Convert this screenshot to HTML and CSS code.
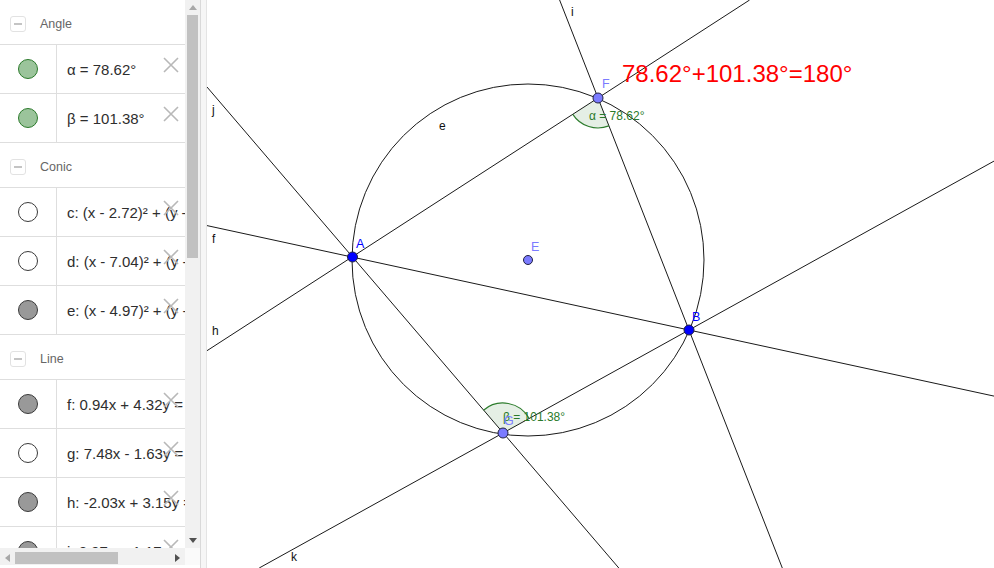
FILE: index.html
```html
<!DOCTYPE html>
<html>
<head>
<meta charset="utf-8">
<title>Inscribed quadrilateral</title>
<link rel="stylesheet" href="styles.css">
</head>
<body>
<div class="app">
  <div class="algebra">
    <div class="av-top">
      <div class="av-list">
        <div class="head first"><span class="toggle"></span><span class="head-label">Angle</span></div>
        <div class="row"><div class="marble-cell"><span class="marble green"></span></div><div class="expr">α = 78.62°</div><span class="del"><svg width="16" height="16" viewBox="0 0 16 16"><path d="M1 1L15 15M15 1L1 15"/></svg></span></div>
        <div class="row"><div class="marble-cell"><span class="marble green"></span></div><div class="expr">β = 101.38°</div><span class="del"><svg width="16" height="16" viewBox="0 0 16 16"><path d="M1 1L15 15M15 1L1 15"/></svg></span></div>
        <div class="head"><span class="toggle"></span><span class="head-label">Conic</span></div>
        <div class="row"><div class="marble-cell"><span class="marble white"></span></div><div class="expr">c: (x - 2.72)² + (y - 5.06)² = 10.39</div><span class="del"><svg width="16" height="16" viewBox="0 0 16 16"><path d="M1 1L15 15M15 1L1 15"/></svg></span></div>
        <div class="row"><div class="marble-cell"><span class="marble white"></span></div><div class="expr">d: (x - 7.04)² + (y - 4.12)² = 13.47</div><span class="del"><svg width="16" height="16" viewBox="0 0 16 16"><path d="M1 1L15 15M15 1L1 15"/></svg></span></div>
        <div class="row"><div class="marble-cell"><span class="marble gray"></span></div><div class="expr">e: (x - 4.97)² + (y - 4.94)² = 12.28</div><span class="del"><svg width="16" height="16" viewBox="0 0 16 16"><path d="M1 1L15 15M15 1L1 15"/></svg></span></div>
        <div class="head"><span class="toggle"></span><span class="head-label">Line</span></div>
        <div class="row"><div class="marble-cell"><span class="marble gray"></span></div><div class="expr">f: 0.94x + 4.32y = 23.25</div><span class="del"><svg width="16" height="16" viewBox="0 0 16 16"><path d="M1 1L15 15M15 1L1 15"/></svg></span></div>
        <div class="row"><div class="marble-cell"><span class="marble white"></span></div><div class="expr">g: 7.48x - 1.63y = 31.06</div><span class="del"><svg width="16" height="16" viewBox="0 0 16 16"><path d="M1 1L15 15M15 1L1 15"/></svg></span></div>
        <div class="row"><div class="marble-cell"><span class="marble gray"></span></div><div class="expr">h: -2.03x + 3.15y = 13.16</div><span class="del"><svg width="16" height="16" viewBox="0 0 16 16"><path d="M1 1L15 15M15 1L1 15"/></svg></span></div>
        <div class="row"><div class="marble-cell"><span class="marble gray"></span></div><div class="expr">i: 2.97x + 1.17y = 27.38</div><span class="del"><svg width="16" height="16" viewBox="0 0 16 16"><path d="M1 1L15 15M15 1L1 15"/></svg></span></div>
      </div>
      <div class="vscroll">
        <span class="arrow"><svg width="8" height="5" viewBox="0 0 8 5"><path d="M0 5L4 0L8 5Z" fill="#a8a8a8"/></svg></span>
        <span class="vthumb"></span>
        <span class="vspace"></span>
        <span class="arrow"><svg width="8" height="5" viewBox="0 0 8 5"><path d="M0 0L4 5L8 0Z" fill="#505050"/></svg></span>
      </div>
    </div>
    <div class="av-bottom">
      <div class="hscroll">
        <span class="harrow"><svg width="5" height="8" viewBox="0 0 5 8"><path d="M5 0L0 4L5 8Z" fill="#a8a8a8"/></svg></span>
        <span class="hthumb"></span>
        <span class="hspace"></span>
        <span class="harrow"><svg width="5" height="8" viewBox="0 0 5 8"><path d="M0 0L5 4L0 8Z" fill="#505050"/></svg></span>
      </div>
      <div class="corner"></div>
    </div>
  </div>
  <div class="splitter"></div>
  <div class="graphics">
    <svg class="canvas" width="787" height="568" viewBox="207 0 787 568">
      <g class="lines">
        <line x1="207" y1="225.6" x2="994" y2="396.1"/>
        <line x1="207" y1="350.7" x2="749.6" y2="0"/>
        <line x1="207" y1="87" x2="618.8" y2="568"/>
        <line x1="559.6" y1="0" x2="782.3" y2="568"/>
        <line x1="259.2" y1="568" x2="994" y2="161.1"/>
        <circle cx="528" cy="260" r="176" fill="none"/>
      </g>
      <path class="sector" d="M598 98L608.9 125.9A30 30 0 0 1 572.8 114.3Z"/>
      <path class="arc" d="M608.9 125.9A30 30 0 0 1 572.8 114.3"/>
      <path class="sector" d="M503 433L483.5 410.2A30 30 0 0 1 529.2 418.5Z"/>
      <path class="arc" d="M483.5 410.2A30 30 0 0 1 529.2 418.5"/>
      <g class="lbl">
        <text x="571" y="16">i</text>
        <text x="212" y="114">j</text>
        <text x="212" y="243">f</text>
        <text x="212" y="335">h</text>
        <text x="291" y="561">k</text>
        <text x="439" y="130">e</text>
      </g>
      <text class="anglbl" x="589" y="120">α = 78.62°</text>
      <text class="anglbl" x="503" y="421">β = 101.38°</text>
      <circle class="pt dark" cx="352.5" cy="257" r="5"/>
      <circle class="pt dark" cx="689" cy="330" r="5"/>
      <circle class="pt light" cx="528" cy="260" r="4.5"/>
      <circle class="pt light" cx="598" cy="98" r="5"/>
      <circle class="pt light" cx="503" cy="433" r="5"/>
      <text class="ptl dark-t" x="356" y="248">A</text>
      <text class="ptl dark-t" x="692" y="321">B</text>
      <text class="ptl light-t" x="531" y="251">E</text>
      <text class="ptl light-t" x="602" y="88">F</text>
      <text class="ptl light-t" x="504" y="425">G</text>
      <text class="sum" x="622" y="82">78.62°+101.38°=180°</text>
    </svg>
  </div>
</div>
</body>
</html>
```

FILE: styles.css
```css
* { box-sizing: border-box; }
html, body { margin: 0; padding: 0; }
body {
  width: 994px;
  height: 568px;
  overflow: hidden;
  background: #ffffff;
  font-family: "Liberation Sans", Arial, sans-serif;
}
.app { display: flex; height: 568px; }

/* algebra view */
.algebra { width: 200px; display: flex; flex-direction: column; }
.av-top { display: flex; height: 548px; }
.av-list { width: 185px; overflow: hidden; }

.head {
  height: 45px;
  border-bottom: 1px solid #dedede;
  display: flex;
  align-items: center;
  padding-top: 3px;
  padding-left: 10px;
}
.head.first { height: 45px; }
.toggle {
  width: 16px;
  height: 16px;
  border: 1px solid #e2e2e2;
  border-radius: 3px;
  position: relative;
  flex: none;
}
.toggle::after {
  content: "";
  position: absolute;
  left: 3px;
  top: 6px;
  width: 8px;
  height: 2px;
  background: #c4c4c4;
}
.head-label {
  margin-left: 14px;
  font-size: 12.5px;
  color: #666666;
}

.row {
  height: 49px;
  border-bottom: 1px solid #dedede;
  display: flex;
  position: relative;
  white-space: nowrap;
}
.marble-cell {
  width: 57px;
  flex: none;
  border-right: 1px solid #dedede;
  display: flex;
  align-items: center;
  justify-content: center;
  padding-right: 1px;
}
.marble {
  width: 20px;
  height: 20px;
  border-radius: 50%;
  border: 1px solid #333333;
}
.marble.green { background: #9bc49b; border-color: #2b7a2b; }
.marble.gray { background: #999999; border-color: #3a3a3a; }
.marble.white { background: #ffffff; border-color: #3a3a3a; }
.expr {
  padding-left: 10px;
  display: flex;
  align-items: center;
  font-size: 15px;
  color: #2e2e2e;
}
.del {
  position: absolute;
  left: 163px;
  top: 12px;
  width: 16px;
  height: 16px;
}
.del svg { display: block; }
.del path { stroke: #b8b8b8; stroke-width: 1.6; fill: none; }

/* scrollbars */
.vscroll {
  width: 15px;
  background: #f1f1f1;
  display: flex;
  flex-direction: column;
  align-items: flex-start;
  padding-left: 2px;
}
.arrow { width: 11px; height: 15px; display: flex; align-items: center; justify-content: center; flex: none; }
.arrow svg { display: block; }
.vthumb { width: 11px; height: 243px; background: #c1c1c1; flex: none; }
.vspace { flex: 1; }

.av-bottom { display: flex; height: 20px; }
.hscroll {
  width: 185px;
  height: 17px;
  background: #f1f1f1;
  display: flex;
  align-items: center;
  padding-top: 2px;
}
.harrow { width: 15px; height: 12px; display: flex; align-items: center; justify-content: center; flex: none; }
.harrow svg { display: block; }
.hthumb { width: 103px; height: 12px; background: #c1c1c1; flex: none; }
.hspace { flex: 1; }
.corner { width: 15px; height: 17px; background: #fafafa; }

.splitter {
  width: 7px;
  height: 568px;
  background: #f6f6f6;
  border-left: 1px solid #d9d9d9;
  border-right: 1px solid #e4e4e4;
}

/* graphics view */
.graphics { flex: 1; height: 568px; overflow: hidden; }
.canvas { display: block; }
.lines line, .lines circle { stroke: #1a1a1a; stroke-width: 1; }
.sector { fill: rgba(0, 100, 0, 0.1); stroke: none; }
.arc { fill: none; stroke: #2e7d2e; stroke-width: 1.2; }
.lbl text { font-family: "Liberation Sans", Arial, sans-serif; font-size: 12px; fill: #111111; }
.anglbl { font-family: "Liberation Sans", Arial, sans-serif; font-size: 12px; fill: #2a7a2a; }
.pt { stroke: #202040; stroke-width: 1; }
.pt.dark { fill: #0000ff; }
.pt.light { fill: #7b7bff; }
.ptl { font-family: "Liberation Sans", Arial, sans-serif; font-size: 12.5px; }
.dark-t { fill: #0000ff; }
.light-t { fill: #7b7bff; }
.sum { font-family: "Liberation Sans", Arial, sans-serif; font-size: 24px; fill: #ff0000; }
```
